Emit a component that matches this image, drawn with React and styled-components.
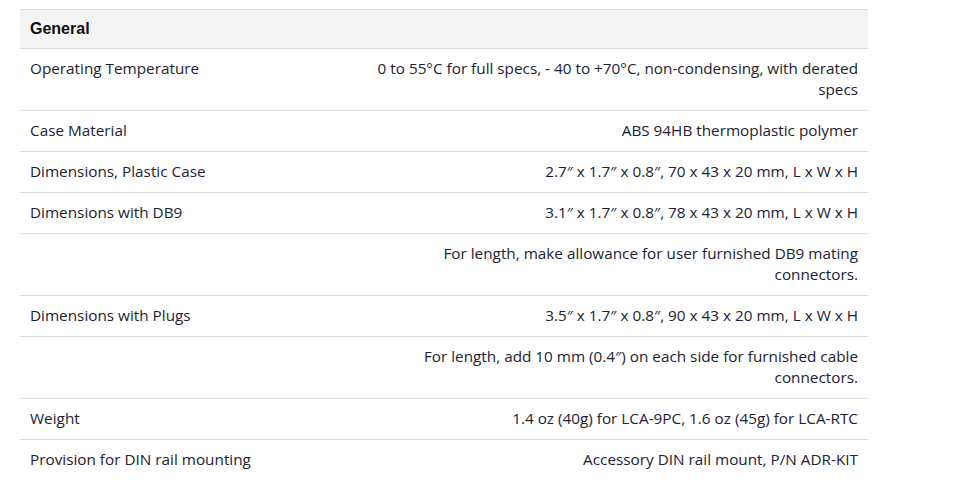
import React from "react";
import styled, { createGlobalStyle } from "styled-components";

const GlobalStyle = createGlobalStyle`
    body {
        margin: 0;
        background: #ffffff;
    }
`;

const StyledWrapper = styled.div`
    padding: 9px 90px 0 20px;
`;

const SpecTable = styled.table`
    width: 848px;
    border-collapse: collapse;
    table-layout: fixed;
    border-top: 1px solid #dddddd;
`;

const HeadCell = styled.th`
    background: #f4f4f4;
    text-align: left;
    font-family: "Liberation Sans", Arial, sans-serif;
    font-weight: bold;
    font-size: 16px;
    color: #111111;
    padding: 0 10px;
    height: 38px;
    border-bottom: 1px solid #dddddd;
`;

const Cell = styled.td`
    font-family: "Open Sans", sans-serif;
    font-size: 15.3px;
    line-height: 21px;
    color: #222233;
    padding: 9px 10px 10px;
    vertical-align: top;
    text-align: ${(props) => (props.$right ? "right" : "left")};
    border-bottom: 1px solid #dddddd;
`;

const specs = [
    ["Operating Temperature", "0 to 55°C for full specs, - 40 to +70°C, non-condensing, with derated specs"],
    ["Case Material", "ABS 94HB thermoplastic polymer"],
    ["Dimensions, Plastic Case", "2.7″ x 1.7″ x 0.8″, 70 x 43 x 20 mm, L x W x H"],
    ["Dimensions with DB9", "3.1″ x 1.7″ x 0.8″, 78 x 43 x 20 mm, L x W x H"],
    ["", "For length, make allowance for user furnished DB9 mating connectors."],
    ["Dimensions with Plugs", "3.5″ x 1.7″ x 0.8″, 90 x 43 x 20 mm, L x W x H"],
    ["", "For length, add 10 mm (0.4″) on each side for furnished cable connectors."],
    ["Weight", "1.4 oz (40g) for LCA-9PC, 1.6 oz (45g) for LCA-RTC"],
    ["Provision for DIN rail mounting", "Accessory DIN rail mount, P/N ADR-KIT"],
];

function App() {
    return (
        <StyledWrapper>
            <GlobalStyle />
            <SpecTable>
                <colgroup>
                    <col style={{ width: "338px" }} />
                    <col />
                </colgroup>
                <thead>
                    <tr>
                        <HeadCell colSpan={2}>General</HeadCell>
                    </tr>
                </thead>
                <tbody>
                    {specs.map(([label, value], i) => (
                        <tr key={i}>
                            <Cell>{label}</Cell>
                            <Cell $right>{value}</Cell>
                        </tr>
                    ))}
                </tbody>
            </SpecTable>
        </StyledWrapper>
    );
}

export default App;
